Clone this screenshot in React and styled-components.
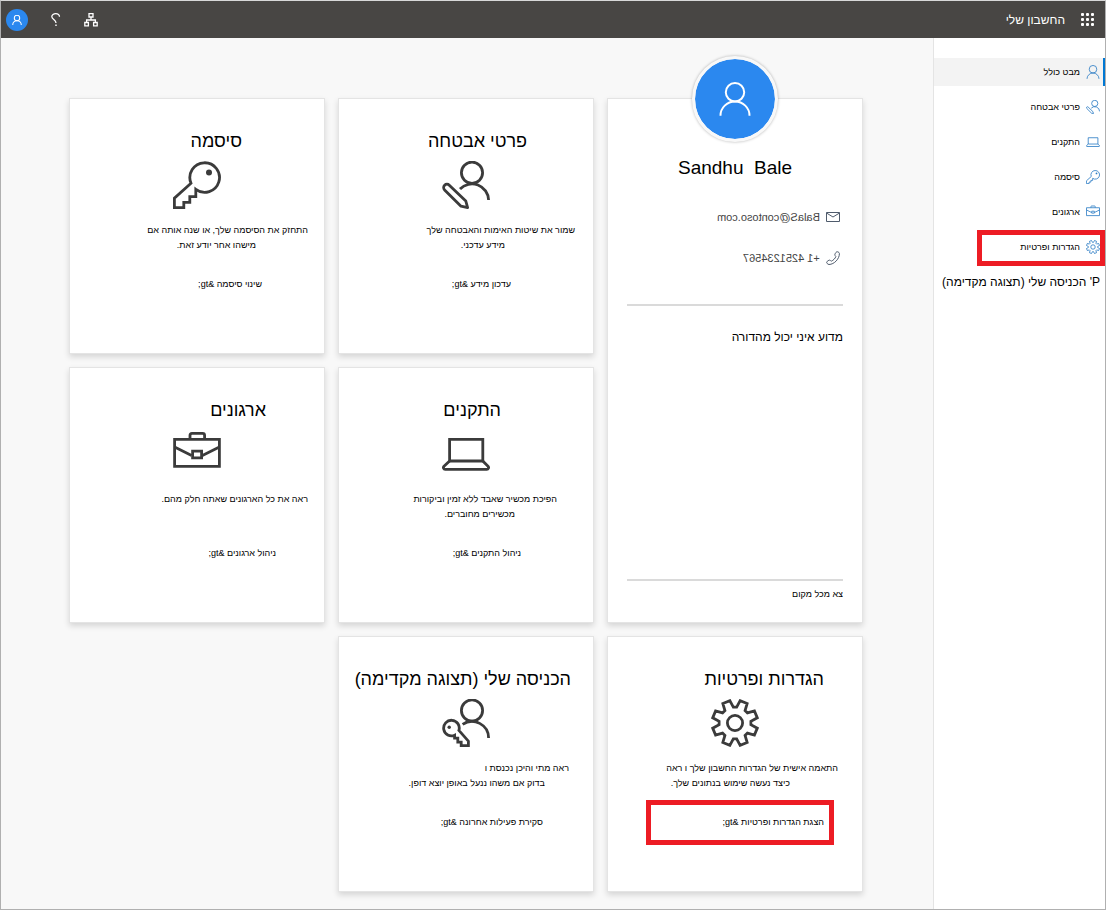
import React from "react";
import styled, { createGlobalStyle } from "styled-components";

const GlobalStyle = createGlobalStyle`
  * {
    box-sizing: border-box;
  }

  body {
    margin: 0;
    background-color: #f8f8f8;
    color: #000;
    font-family: "Liberation Sans", Arial, sans-serif;
  }
`;

const Page = styled.div`
  display: flex;
  flex-direction: column;
  min-height: 100vh;
  border: 1px solid #b0b0b0;
  border-top-color: #d8d8d8;
`;

const Header = styled.header`
  display: flex;
  align-items: center;
  justify-content: space-between;
  height: 37px;
  padding: 0 11px 0 5px;
  background-color: #484644;
  color: #fff;
`;

const HeaderGroup = styled.div`
  display: flex;
  align-items: center;
  gap: ${(props) => props.$gap}px;
`;

const HeaderButton = styled.button`
  display: flex;
  padding: 0;
  border: none;
  background: none;
  color: inherit;
  cursor: pointer;
`;

const HeaderTitle = styled.h1`
  margin: 0;
  font-size: 12px;
  font-weight: 400;
`;

const SmallAvatar = styled.span`
  display: flex;
  align-items: center;
  justify-content: center;
  width: 22px;
  height: 22px;
  border-radius: 50%;
  background-color: #2b88ef;
`;

const Body = styled.div`
  display: flex;
  flex: 1;
`;

const SideNav = styled.nav`
  flex: 0 0 172px;
  min-width: 0;
  padding-top: 20px;
  border-left: 1px solid #e4e4e4;
  background-color: #fff;
`;

const NavList = styled.ul`
  display: flex;
  flex-direction: column;
  gap: 7px;
  margin: 0;
  padding: 0;
  list-style: none;
`;

const NavLink = styled.a`
  position: relative;
  display: flex;
  align-items: center;
  gap: 6px;
  height: 28px;
  padding-right: 5px;
  background-color: ${(props) => (props.$active ? "#f3f3f3" : "transparent")};
  box-shadow: ${(props) => (props.$active ? "inset -2px 0 #0078d4" : "none")};
  color: #000;
  font-size: ${(props) => (props.$large ? 12 : 9)}px;
  white-space: nowrap;
  text-decoration: none;

  svg {
    color: #2b7cc4;
  }
`;

const NavMarker = styled.span`
  position: absolute;
  top: -3px;
  right: 0;
  width: 128px;
  height: 36px;
  border: 5px solid #ed1c24;
`;

const Main = styled.main`
  flex: 1;
  min-width: 0;
  padding: 60px 17px 16px 15px;
`;

const CardGrid = styled.div`
  display: grid;
  grid-template-columns: repeat(3, minmax(0, 1fr));
  grid-auto-rows: 256px;
  gap: 13px;
  max-width: 794px;
  margin: 0 auto;
`;

const Card = styled.section`
  display: flex;
  flex-direction: column;
  border: 1px solid #e4e4e4;
  background-color: #fff;
  box-shadow: 0 3px 6px rgba(0, 0, 0, 0.14);
`;

const TileCard = styled(Card)`
  padding-top: 30px;

  > svg {
    align-self: center;
    margin: 8px 0 14px;
    color: #3b3b3b;
  }
`;

const TileTitle = styled.h2`
  margin: 0;
  padding-right: ${(props) => props.$inset}px;
  font-size: 18px;
  font-weight: 400;
  line-height: 24px;
  white-space: nowrap;
`;

const TileText = styled.p`
  min-height: 30px;
  margin: 0 0 24px;
  font-size: 9px;
  line-height: 15px;
`;

const TileLine = styled.span`
  display: block;
  padding-right: ${(props) => props.$inset}px;
  white-space: nowrap;
`;

const TileLink = styled.a`
  position: relative;
  align-self: flex-start;
  margin-right: ${(props) => props.$inset}px;
  color: #000;
  font-size: 9px;
  line-height: 15px;
  white-space: nowrap;
  text-decoration: none;
`;

const LinkMarker = styled.span`
  position: absolute;
  top: -15px;
  right: -10px;
  width: 188px;
  height: 45px;
  border: 5px solid #ed1c24;
`;

const ProfileCard = styled(Card)`
  grid-row: span 2;
  padding: 0 19px 20px;
`;

const Avatar = styled.div`
  display: flex;
  align-items: center;
  justify-content: center;
  align-self: center;
  width: 86px;
  height: 86px;
  margin-top: -43px;
  border: 3px solid #f8f8f8;
  border-radius: 50%;
  background-color: #2b88ef;
  background-clip: padding-box;
  box-shadow: 0 0 3px rgba(0, 0, 0, 0.3);
  color: #fff;
`;

const ProfileName = styled.h2`
  margin: 14px 0 25px;
  font-size: 19px;
  font-weight: 400;
  line-height: 24px;
  text-align: center;
  white-space: pre;
`;

const ContactRow = styled.div`
  display: flex;
  align-items: center;
  gap: 6px;
  height: 24px;
  margin-bottom: 17px;
  padding-right: 3px;
  color: #444;
  font-size: 11px;

  svg {
    color: #4f5b6c;
  }
`;

const Mirrored = styled.span`
  direction: ltr;
  transform: scaleX(-1);
`;

const Divider = styled.hr`
  width: 100%;
  height: 2px;
  margin: ${(props) => (props.$bottom ? "auto 0 6px" : "17px 0 22px")};
  border: none;
  background-color: #dadada;
`;

const ProfileLink = styled.a`
  align-self: flex-start;
  color: #000;
  font-size: ${(props) => (props.$small ? 9 : 12)}px;
  line-height: ${(props) => (props.$small ? 15 : 18)}px;
  text-decoration: none;
`;

const Icon = ({ size = 48, box = "0 0 48 48", width = 2.8, children }) => (
  <svg
    width={size}
    height={size}
    viewBox={box}
    fill="none"
    stroke="currentColor"
    strokeWidth={width}
    aria-hidden="true"
  >
    {children}
  </svg>
);

const PersonIcon = ({ size, width }) => (
  <Icon size={size} width={width}>
    <circle cx="24" cy="14.5" r="13" />
    <path d="M3.5 47.5a20.5 20 0 0 1 41 0" />
  </Icon>
);

const SecurityIcon = ({ size }) => (
  <Icon size={size}>
    <circle cx="30" cy="11.7" r="10.6" />
    <path d="M18 28a16.6 16.6 0 0 1 28.6 11" />
    <path
      d="M7.3 24.2 23.8 40l1.8 6.6-6.6-1.4L2.6 28.9a3.3 3.3 0 0 1 4.7-4.7z"
      strokeLinejoin="round"
    />
  </Icon>
);

const KeyIcon = ({ size }) => (
  <Icon size={size}>
    <path d="M18 22.2 1.4 37.2v9.4h9.4v-5.2h6v-5.8h6v-7.2A14.8 14.8 0 1 0 18 22.2z" />
    <circle cx="36" cy="11.6" r="3" fill="currentColor" stroke="none" />
  </Icon>
);

const LaptopIcon = ({ size }) => (
  <Icon size={size}>
    <path d="M7.6 31V9.4h33.2V31z" />
    <path
      d="M7.6 31 2 36.3c-1.2 1.3-.4 3.1 1.2 3.1h41.6c1.6 0 2.4-1.8 1.2-3.1L40.8 31"
      strokeLinejoin="round"
    />
  </Icon>
);

const BriefcaseIcon = ({ size }) => (
  <Icon size={size}>
    <path d="M1.6 9.4h44.8v27H1.6z" />
    <path d="M17 9V5.4c0-1.2.6-2 2-2h10.6c1.4 0 2 .8 2 2V9" />
    <path d="M1.6 17l17 8.4M46.4 17l-17 8.4" />
    <path d="M19.6 21.2h9v6.6h-9z" />
  </Icon>
);

const SignInIcon = ({ size }) => (
  <Icon size={size}>
    <circle cx="30" cy="11.5" r="10.6" />
    <path d="M20.6 25.4a16.6 16.6 0 0 1 26 13.6" />
    <path d="M16.9 31.4l9.5 10.8v4.4h-7.2v-3.4h-3.4v-4h-3.2v-3A7.8 7.8 0 1 1 16.9 31.4z" />
    <circle cx="7.2" cy="28.2" r="1.7" fill="currentColor" stroke="none" />
  </Icon>
);

const polar = (radius, degrees) => {
  const angle = (degrees * Math.PI) / 180;
  const x = 24 + radius * Math.sin(angle);
  const y = 24 - radius * Math.cos(angle);
  return `${x.toFixed(2)},${y.toFixed(2)}`;
};

// eight teeth, each one starting from the valley before it
const gearPoints = [0, 45, 90, 135, 180, 225, 270, 315]
  .map((a) =>
    [polar(16, a - 6), polar(16, a + 6), polar(22.9, a + 13), polar(22.9, a + 32)].join(" ")
  )
  .join(" ");

const GearIcon = ({ size }) => (
  <Icon size={size}>
    <polygon points={gearPoints} />
    <circle cx="24" cy="24" r="7.6" />
  </Icon>
);

const MailIcon = () => (
  <Icon size={14} box="0 0 14 14" width={1}>
    <path d="M.5 2.5h13v9H.5z" />
    <path d="M.5 3 7 7l6.5-4" />
  </Icon>
);

const PhoneIcon = () => (
  <Icon size={14} box="0 0 14 14" width={1}>
    <path d="M10.6.9c.8-.5 2.7.4 2.8 1.5.2 5.4-5.2 11-10.4 11.1C1.7 13.4.3 11.9.7 11c.4-.8 2.3-2 3-1.9.8.1 1.1 1.2 1.8 1 1.6-.6 3.9-2.9 4.3-4.4.2-.8-1-1-1-1.8 0-.8 1-2.6 1.8-3z" />
  </Icon>
);

const HelpIcon = () => (
  <Icon size={14} box="0 0 14 14" width={1.3}>
    <path d="M10.5 3.7C10.5 1.7 9 .7 6.8.7S2.8 1.800 2.800 3.600c0 3 4.200 3 4.200 6.400" />
    <path d="M6.300 12.300h1.400" strokeWidth="1.500" />
  </Icon>
);

const OrgIcon = () => (
  <Icon size={14} box="0 0 14 14" width={1.3}>
    <path d="M5 .7h4V4H5zM.8 9.500h3.600v3.300H.8zM9.600 9.500h3.600v3.300H9.600z" />
    <path d="M7 4v3M2.600 9.500V7h8.800v2.500" />
  </Icon>
);

const WaffleIcon = () => (
  <svg width="13" height="13" viewBox="0 0 13 13" fill="currentColor" aria-hidden="true">
    {[0, 5, 10].map((y) =>
      [0, 5, 10].map((x) => <rect key={`${x}-${y}`} x={x} y={y} width="3" height="3" rx="1" />)
    )}
  </svg>
);

const navItems = [
  { label: "מבט כולל", icon: PersonIcon, active: true },
  { label: "פרטי אבטחה", icon: SecurityIcon },
  { label: "התקנים", icon: LaptopIcon },
  { label: "סיסמה", icon: KeyIcon },
  { label: "ארגונים", icon: BriefcaseIcon },
  { label: "הגדרות ופרטיות", icon: GearIcon, marked: true },
  { label: "P' הכניסה שלי (תצוגה מקדימה)" },
];

const tiles = [
  {
    title: "פרטי אבטחה",
    titleInset: 66,
    icon: SecurityIcon,
    lines: [
      { text: "שמור את שיטות האימות והאבטחה שלך", inset: 18 },
      { text: "מידע עדכני.", inset: 88 },
    ],
    link: "עדכון מידע &gt;",
    linkInset: 82,
  },
  {
    title: "סיסמה",
    titleInset: 82,
    icon: KeyIcon,
    lines: [
      { text: "התחזק את הסיסמה שלך, או שנה אותה אם", inset: 16 },
      { text: "מישהו אחר יודע זאת.", inset: 68 },
    ],
    link: "שינוי סיסמה &gt;",
    linkInset: 62,
  },
  {
    title: "התקנים",
    titleInset: 92,
    icon: LaptopIcon,
    lines: [
      { text: "הפיכת מכשיר שאבד ללא זמין וביקורות", inset: 36 },
      { text: "מכשירים מחוברים.", inset: 78 },
    ],
    link: "ניהול התקנים &gt;",
    linkInset: 72,
  },
  {
    title: "ארגונים",
    titleInset: 58,
    icon: BriefcaseIcon,
    lines: [{ text: "ראה את כל הארגונים שאתה חלק מהם.", inset: 16 }],
    link: "ניהול ארגונים &gt;",
    linkInset: 48,
  },
  {
    title: "הגדרות ופרטיות",
    titleInset: 38,
    icon: GearIcon,
    lines: [
      { text: "התאמה אישית של הגדרות החשבון שלך ו ראה", inset: 24 },
      { text: "כיצד נעשה שימוש בנתונים שלך.", inset: 72 },
    ],
    link: "הצגת הגדרות ופרטיות &gt;",
    linkInset: 38,
    marked: true,
  },
  {
    title: "הכניסה שלי (תצוגה מקדימה)",
    titleInset: 22,
    icon: SignInIcon,
    lines: [
      { text: "ראה מתי והיכן נכנסת ו", inset: 24 },
      { text: "בדוק אם משהו ננעל באופן יוצא דופן.", inset: 48 },
    ],
    link: "סקירת פעילות אחרונה &gt;",
    linkInset: 50,
  },
];

function Tile({ tile }) {
  const TileIcon = tile.icon;

  return (
    <TileCard>
      <TileTitle $inset={tile.titleInset}>{tile.title}</TileTitle>
      <TileIcon size={48} />
      <TileText>
        {tile.lines.map((line) => (
          <TileLine key={line.text} $inset={line.inset}>
            {line.text}
          </TileLine>
        ))}
      </TileText>
      <TileLink href="#" $inset={tile.linkInset}>
        {tile.link}
        {tile.marked && <LinkMarker />}
      </TileLink>
    </TileCard>
  );
}

function Profile() {
  return (
    <ProfileCard>
      <Avatar>
        <PersonIcon size={34} width={2.8} />
      </Avatar>
      <ProfileName dir="ltr">Sandhu  Bale</ProfileName>
      <ContactRow>
        <MailIcon />
        <Mirrored>BalaS@contoso.com</Mirrored>
      </ContactRow>
      <ContactRow>
        <PhoneIcon />
        <Mirrored>+1 4251234567</Mirrored>
      </ContactRow>
      <Divider />
      <ProfileLink href="#">מדוע איני יכול מהדורה</ProfileLink>
      <Divider $bottom />
      <ProfileLink href="#" $small>
        צא מכל מקום
      </ProfileLink>
    </ProfileCard>
  );
}

function App() {
  return (
    <>
      <GlobalStyle />
      <Page dir="rtl" lang="he">
        <Header>
          <HeaderGroup $gap={16}>
            <HeaderButton aria-label="אפליקציות">
              <WaffleIcon />
            </HeaderButton>
            <HeaderTitle>החשבון שלי</HeaderTitle>
          </HeaderGroup>
          <HeaderGroup $gap={21}>
            <HeaderButton aria-label="ארגונים">
              <OrgIcon />
            </HeaderButton>
            <HeaderButton aria-label="עזרה">
              <HelpIcon />
            </HeaderButton>
            <HeaderButton aria-label="חשבון">
              <SmallAvatar>
                <PersonIcon size={10} width={5} />
              </SmallAvatar>
            </HeaderButton>
          </HeaderGroup>
        </Header>
        <Body>
          <SideNav>
            <NavList>
              {navItems.map(({ label, icon: NavIcon, active, marked }) => (
                <li key={label}>
                  <NavLink href="#" $active={active} $large={!NavIcon}>
                    {NavIcon && <NavIcon size={14} />}
                    {label}
                    {marked && <NavMarker />}
                  </NavLink>
                </li>
              ))}
            </NavList>
          </SideNav>
          <Main>
            <CardGrid>
              <Profile />
              {tiles.map((tile) => (
                <Tile key={tile.title} tile={tile} />
              ))}
            </CardGrid>
          </Main>
        </Body>
      </Page>
    </>
  );
}

export default App;
